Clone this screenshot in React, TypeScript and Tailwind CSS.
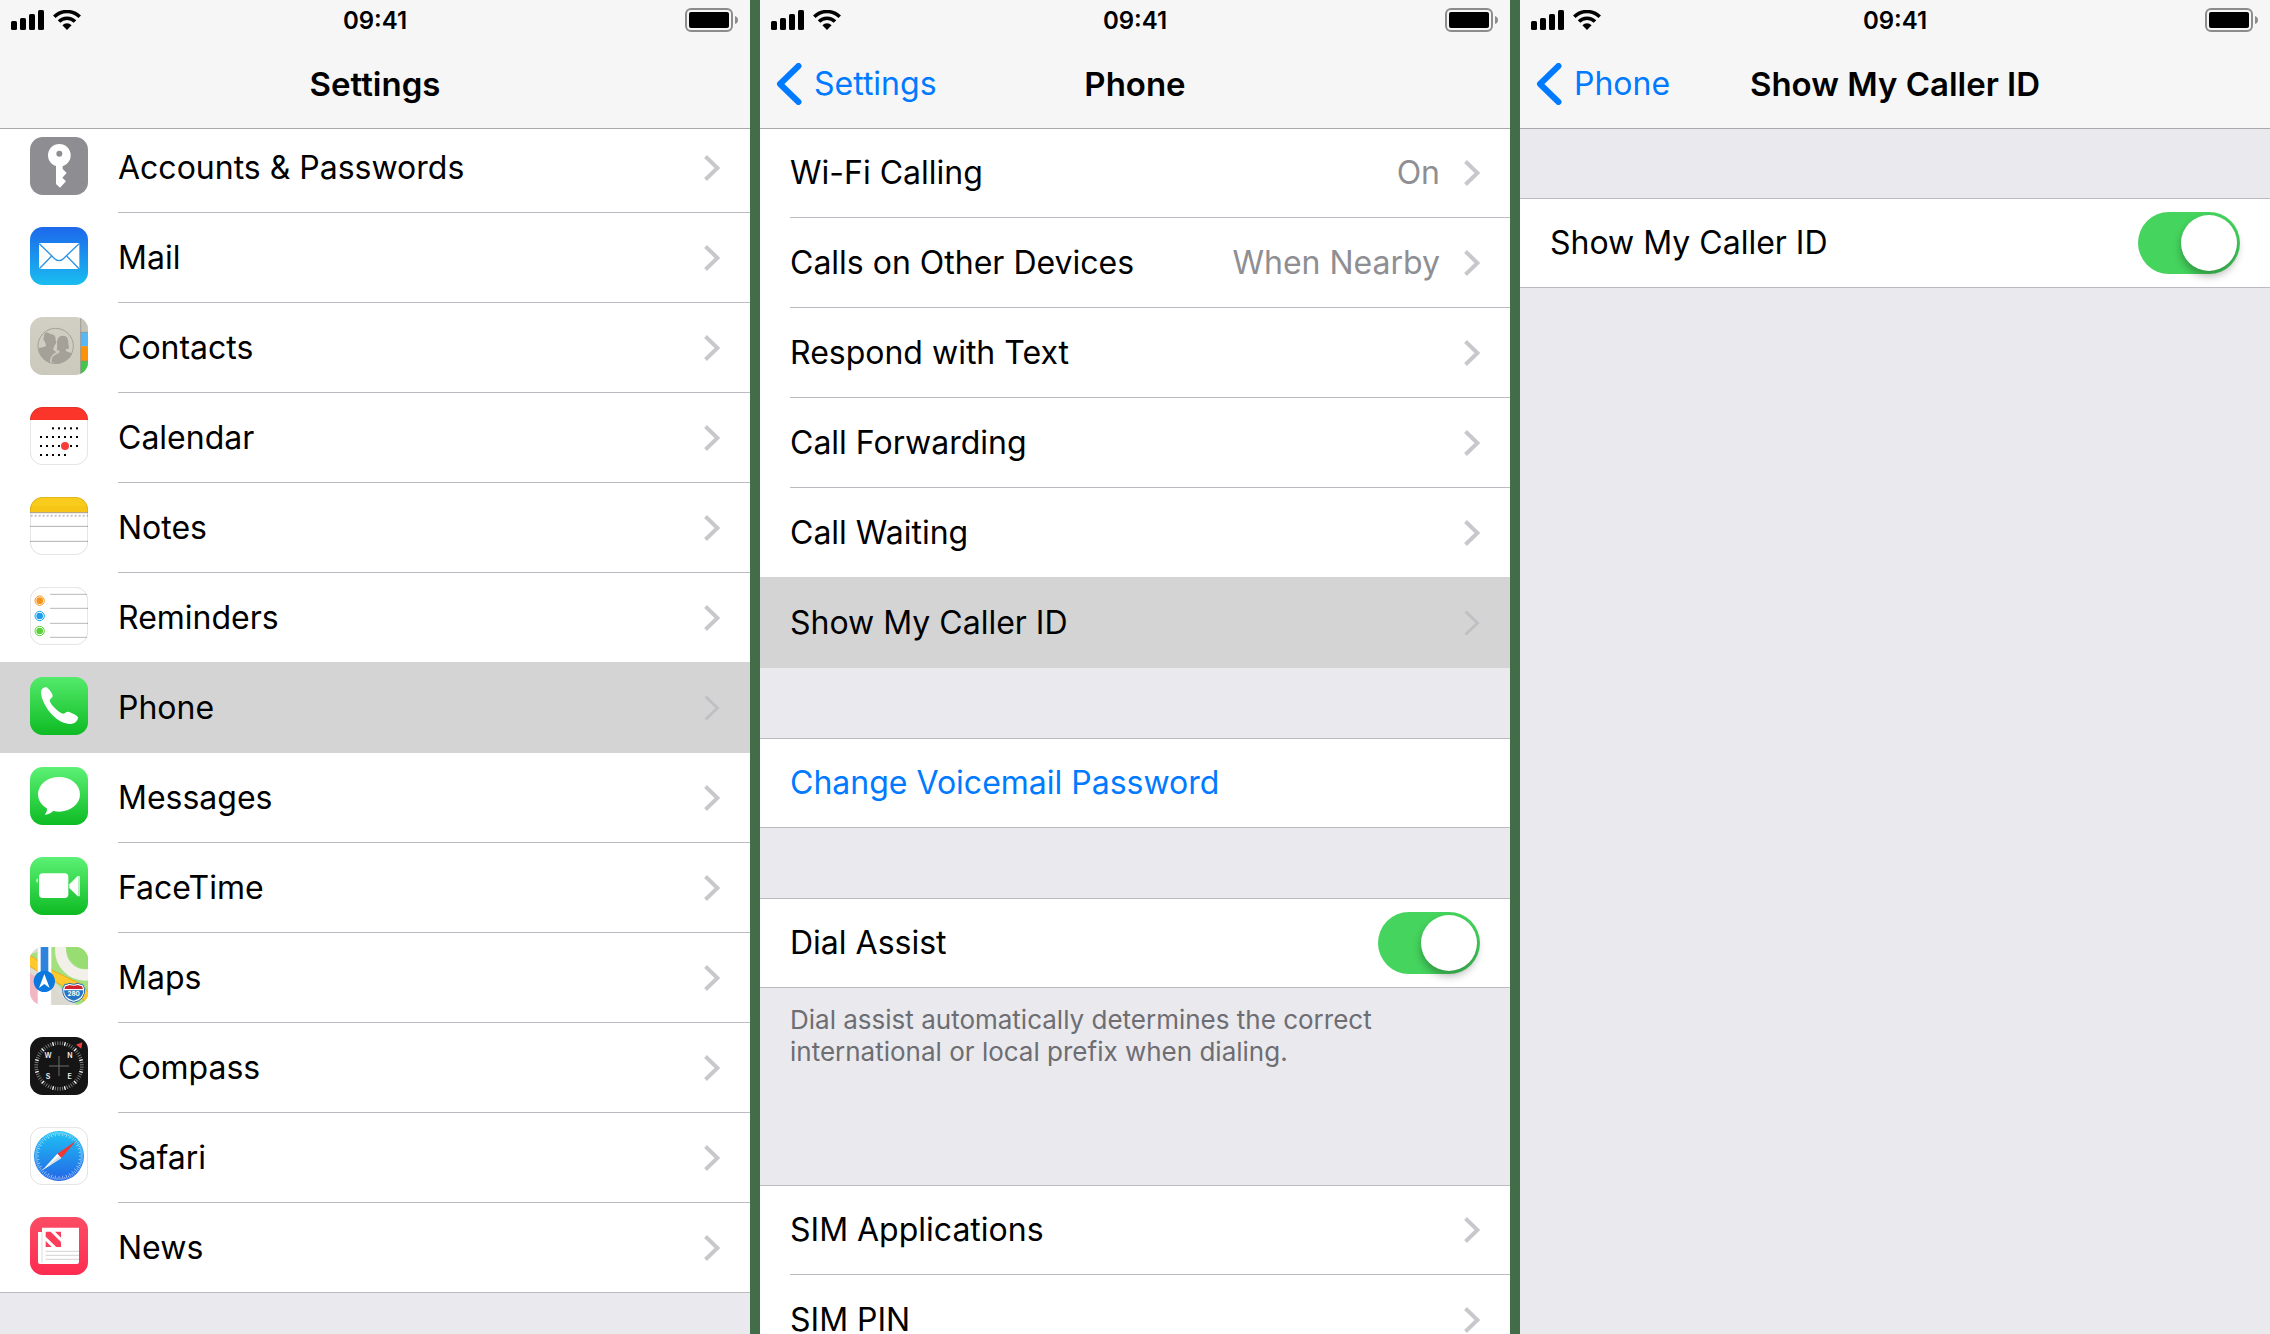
import { useId, useState } from 'react'
import type { ReactNode } from 'react'

const COMPASS_TICKS = Array.from({ length: 60 }, (_, i) => i * 6)
const SAFARI_TICKS = Array.from({ length: 72 }, (_, i) => i * 5)
const CALENDAR_ROWS = [
  { y: 64, xs: [69, 87, 105, 123, 141] },
  { y: 90, xs: [33, 51, 69, 87, 105, 123, 141] },
  { y: 117, xs: [33, 51, 69, 87, 105, 123, 141] },
  { y: 144, xs: [33, 51, 69, 87, 105] },
]

function Tile({
  from,
  to = from,
  outlined,
  children,
}: {
  from: string
  to?: string
  outlined?: boolean
  children: ReactNode
}) {
  const id = useId()
  return (
    <svg viewBox="0 0 174 174" className="mb-1 size-[58px] shrink-0" aria-hidden="true">
      <defs>
        <linearGradient id={`${id}g`} x1="0" y1="0" x2="0" y2="1">
          <stop offset="0" stopColor={from} />
          <stop offset="1" stopColor={to} />
        </linearGradient>
        <clipPath id={`${id}c`}>
          <rect width="174" height="174" rx="38" />
        </clipPath>
      </defs>
      <g clipPath={`url(#${id}c)`}>
        <rect width="174" height="174" fill={`url(#${id}g)`} />
        {children}
      </g>
      {outlined && (
        <rect x="1" y="1" width="172" height="172" rx="37" fill="none" stroke="#000" strokeOpacity="0.18" strokeWidth="2" />
      )}
    </svg>
  )
}

function KeyIcon() {
  return (
    <Tile from="#8e8d92">
      <path fill="#fff" d="M78 85v56l12 11 18-19-11-11 13-14-12-12V85z" />
      <circle cx="88" cy="55" r="34" fill="#fff" />
      <circle cx="88" cy="50" r="9" fill="#8e8d92" />
    </Tile>
  )
}

function MailIcon() {
  return (
    <Tile from="#1d68ec" to="#19bdf0">
      <rect x="27" y="48" width="121" height="78" rx="3" fill="#fff" />
      <g fill="none" stroke="#2a93e6" strokeWidth="4">
        <path d="M28 50l46 45q13 12 26 0l47-45" />
        <path d="M28 125l37-38M147 125l-37-38" />
      </g>
    </Tile>
  )
}

function ContactsIcon() {
  return (
    <Tile from="#d2cfc4" to="#cbc8bc">
      <circle cx="77" cy="87" r="53" fill="#cfccc1" stroke="#a5a199" strokeWidth="3" />
      <path
        fill="#a5a199"
        d="M60 51c14 0 18 9 17 20 4 3 1 11-3 13-1 6-4 9-4 13 1 5 6 6 11 8-8 3-16 9-20 20l-2 12c-16-5-32-24-34-42 5-5 20-4 23-9 1-3-3-8-4-13-4-3-6-9-2-12-1-12 5-20 18-10z"
      />
      <path
        fill="#a5a199"
        d="M98 56c14 0 17 10 17 22 0 8 3 12 2 16-3 2-7 2-10 3 0 7 6 7 14 10l5 3c-8 19-27 28-49 29l-12-3c-1-14 4-20 14-24 6-3 10-4 10-9l-9-5c1-4 2-10 1-20 1-13 5-22 17-22z"
      />
      <path fill="#c5c2b8" d="M152 0h22v45h-22z" />
      <path fill="#b5b3aa" d="M152 0h22v20z" />
      <path fill="#58b8f5" d="M152 46h22v42h-22z" />
      <path fill="#fb9305" d="M152 88h22v44h-22z" />
      <path fill="#43c64d" d="M152 132h22v42h-22z" />
      <path stroke="#8b8a84" strokeWidth="2" d="M152 0v174M152 46h22M152 132h22" />
    </Tile>
  )
}

function CalendarIcon() {
  return (
    <Tile from="#ffffff" outlined>
      <path fill="#fc352b" d="M0 0h174v39H0z" />
      {CALENDAR_ROWS.map(({ y, xs }) => xs.map((x) => <rect key={`${x}-${y}`} x={x - 3} y={y - 3} width="6" height="6" />))}
      <circle cx="105" cy="117" r="12" fill="#f83b37" />
    </Tile>
  )
}

function NotesIcon() {
  return (
    <Tile from="#ffffff" outlined>
      <path fill="#f9cb1c" d="M0 0h174v46H0z" />
      <path fill="#f3bf10" d="M0 28h174v18H0z" opacity="0.5" />
      <path stroke="#a59b83" strokeWidth="3" d="M0 47h174" />
      <path stroke="#c4c4c4" strokeWidth="6" strokeDasharray="6 6" d="M2 56h172" />
      <path stroke="#b0b0b0" strokeWidth="3" d="M0 88h174M0 133h174" />
    </Tile>
  )
}

function RemindersIcon() {
  return (
    <Tile from="#ffffff" outlined>
      <path stroke="#b8b8b8" strokeWidth="3" d="M60 22h114M60 64h114M60 109h114M60 151h114" />
      {[
        { y: 41, color: '#f5941a' },
        { y: 87, color: '#1a9fea' },
        { y: 132, color: '#5bd038' },
      ].map(({ y, color }) => (
        <g key={y}>
          <circle cx="29" cy={y} r="14" fill="#fff" stroke={color} strokeWidth="3" />
          <circle cx="29" cy={y} r="10" fill={color} />
        </g>
      ))}
    </Tile>
  )
}

function PhoneIcon() {
  return (
    <Tile from="#54ea6b" to="#0dbb23">
      <path
        fill="#fff"
        d="M33 44c1-9 9-14 16-13 5 1 19 19 19 25 0 7-8 8-9 14 1 12 27 37 40 40 5 0 9-6 15-6 7 1 28 11 30 17 0 10-9 20-22 20-24 0-48-18-61-34C47 90 32 62 33 44z"
      />
    </Tile>
  )
}

function MessagesIcon() {
  return (
    <Tile from="#5cf175" to="#0dbb23">
      <ellipse cx="87" cy="82" rx="63" ry="52" fill="#fff" />
      <path fill="#fff" d="M48 118c5 8 4 17-4 25 12-1 22-6 29-15z" />
    </Tile>
  )
}

function FaceTimeIcon() {
  return (
    <Tile from="#5cf175" to="#0dbb23">
      <rect x="27" y="49" width="88" height="74" rx="11" fill="#fff" />
      <path fill="#fff" d="M118 82l25-25h3v61h-3l-25-25zM148 57h2v61h-2zM23 64v14l-4-5v-5z" />
    </Tile>
  )
}

function MapsIcon() {
  return (
    <Tile from="#dfdcd3">
      <path fill="#a4df80" d="M64 0h110v174h-34L64 92z" />
      <path fill="#a4df80" d="M0 20l23-4v50L0 40z" />
      <circle cx="166" cy="10" r="74" fill="none" stroke="#f3f0ea" strokeWidth="34" />
      <path fill="#97dd72" d="M108 0c0 34 26 63 66 66V0z" />
      <path fill="#f8a9bd" d="M0 78l23 14v82H0z" opacity="0.75" />
      <path fill="none" stroke="#eda91f" strokeWidth="30" d="M-8 36l72 48 80 38 40 42" />
      <path fill="none" stroke="#fdc92c" strokeWidth="25" d="M-8 36l72 48 80 38 40 42" />
      <path fill="#dcd9d0" d="M64 116l58 58H64z" />
      <path fill="#fff" d="M23 0h41v174H23z" />
      <path stroke="#c9c6bf" strokeWidth="1" d="M23 0v174M64 0v174" />
      <path fill="#2e83dc" d="M32 0h23v90H32z" />
      <circle cx="43" cy="103" r="32" fill="#0a78df" />
      <path fill="#fff" d="M43 81l16 42-16-12-16 12z" />
      <path
        fill="#fff"
        stroke="#226bb5"
        strokeWidth="3"
        d="M104 112q9 1 13-3 14 6 28 0 4 4 13 3 2 7 6 12 2 36-33 42-35-6-33-42 4-5 6-12z"
      />
      <path fill="#d3212e" d="M107 117q8 0 11-3 13 4 26 0 4 3 11 3l4 9h-56z" />
      <path fill="#2575c4" d="M102 130h58q0 24-29 31-29-7-29-31z" />
      <text x="131" y="147" textAnchor="middle" fill="#fff" className="font-['Inter'] text-[19px] font-bold">
        280
      </text>
    </Tile>
  )
}

function CompassIcon() {
  return (
    <Tile from="#151515">
      {COMPASS_TICKS.map((deg) => (
        <path
          key={deg}
          stroke={deg % 30 === 15 || deg % 30 === 0 ? '#fff' : '#a8a8a8'}
          strokeWidth={deg % 30 === 0 ? 4 : 2}
          d="M87 13v11"
          transform={`rotate(${deg + 15} 87 87)`}
        />
      ))}
      <path stroke="#6c6c6c" strokeWidth="3" d="M87 57v60M57 87h60" />
      <path fill="#f0403f" d="M157 16l-3 19-16-12z" />
      <g fill="#f2f2f2" textAnchor="middle" className="font-['Inter'] text-[21px] font-semibold">
        <text x="54" y="63">W</text>
        <text x="120" y="63">N</text>
        <text x="54" y="126">S</text>
        <text x="119" y="126">E</text>
      </g>
    </Tile>
  )
}

function SafariIcon() {
  const id = useId()
  return (
    <Tile from="#ffffff" outlined>
      <linearGradient id={id} x1="0" y1="0" x2="0" y2="1">
        <stop offset="0" stopColor="#1fc3f4" />
        <stop offset="1" stopColor="#2365e6" />
      </linearGradient>
      <circle cx="87" cy="87" r="75" fill={`url(#${id})`} />
      {SAFARI_TICKS.map((deg) => (
        <path
          key={deg}
          stroke="#fff"
          strokeOpacity="0.75"
          strokeWidth="2"
          d={deg % 10 === 0 ? 'M87 15v12' : 'M87 15v7'}
          transform={`rotate(${deg} 87 87)`}
        />
      ))}
      <path fill="#f2362f" d="M138 42L82 80l12 13z" />
      <path fill="#fff" d="M37 130l45-50 12 13z" />
      <path fill="#d8dde6" d="M37 130l51-43 6 6z" />
    </Tile>
  )
}

function NewsIcon() {
  return (
    <Tile from="#fb4d64" to="#fd2c51">
      <path fill="#fff" d="M24 45h14v96H30q-6 0-6-6z" />
      <path fill="#fff" d="M36 32h111v103q0 6-6 6H36z" />
      <path stroke="#c9c9cb" strokeWidth="2" d="M36 45v92" />
      <path fill="#fb3f5b" d="M50 44h12l31 31v15H79L47 59V47q0-3 3-3zM75 44h18v18zM47 72v18h18z" />
      <path stroke="#bdbdbf" strokeWidth="2" d="M47 103h100M47 115h100M47 127h100" />
    </Tile>
  )
}

const SETTINGS = [
  { label: 'Accounts & Passwords', icon: KeyIcon },
  { label: 'Mail', icon: MailIcon },
  { label: 'Contacts', icon: ContactsIcon },
  { label: 'Calendar', icon: CalendarIcon },
  { label: 'Notes', icon: NotesIcon },
  { label: 'Reminders', icon: RemindersIcon },
  { label: 'Phone', icon: PhoneIcon, active: true },
  { label: 'Messages', icon: MessagesIcon },
  { label: 'FaceTime', icon: FaceTimeIcon },
  { label: 'Maps', icon: MapsIcon },
  { label: 'Compass', icon: CompassIcon },
  { label: 'Safari', icon: SafariIcon },
  { label: 'News', icon: NewsIcon },
]

const CALL_OPTIONS = [
  { label: 'Wi-Fi Calling', value: 'On' },
  { label: 'Calls on Other Devices', value: 'When Nearby' },
  { label: 'Respond with Text' },
  { label: 'Call Forwarding' },
  { label: 'Call Waiting' },
  { label: 'Show My Caller ID', active: true },
]

function StatusBar() {
  return (
    <div className="grid h-10 grid-cols-3 items-center px-[11px]">
      <div className="flex items-center gap-2">
        <svg viewBox="0 0 34 20" className="h-5 w-[34px]" aria-hidden="true">
          <rect y="11" width="6" height="9" rx="1.5" />
          <rect x="9" y="8" width="6" height="12" rx="1.5" />
          <rect x="18" y="4" width="6" height="16" rx="1.5" />
          <rect x="27" width="6" height="20" rx="1.5" />
        </svg>
        <svg viewBox="0 0 28 20" className="h-5 w-7" aria-hidden="true">
          <g fill="none" stroke="#000" strokeWidth="3.6">
            <path d="M1.3 6.8a18 18 0 0 1 25.4 0" />
            <path d="M6 11.6a11.3 11.3 0 0 1 16 0" />
          </g>
          <path d="M14 20l-4.6-4.8a6.6 6.6 0 0 1 9.2 0z" />
        </svg>
      </div>
      <div className="pt-0.5 text-center text-[24px] font-semibold leading-[38px]">09:41</div>
      <svg viewBox="0 0 54 24" className="h-6 w-[54px] justify-self-end" aria-hidden="true">
        <rect x="1" y="1" width="46" height="22" rx="5" fill="none" stroke="#8c8c8c" strokeWidth="2" />
        <rect x="4" y="4" width="40" height="16" rx="2" />
        <path fill="#8c8c8c" d="M50 8q3 1 3 4t-3 4z" />
      </svg>
    </div>
  )
}

function Header({ title, back }: { title: string; back?: string }) {
  return (
    <header className="relative z-10 border-b border-[#a9a9ac] bg-[#f6f6f7]">
      <StatusBar />
      <div className="grid h-[88px] grid-cols-[1fr_auto_1fr] items-center px-4">
        <div>
          {back && (
            <button className="flex items-center gap-3 text-[32px] leading-[42px] text-[#007aff]">
              <svg viewBox="0 0 26 42" className="h-[42px] w-[26px]" aria-hidden="true">
                <path
                  d="M22.500 3L4 21l18.500 18"
                  fill="none"
                  stroke="currentColor"
                  strokeWidth="6"
                  strokeLinecap="round"
                  strokeLinejoin="round"
                />
              </svg>
              {back}
            </button>
          )}
        </div>
        <h1 className="text-[33px] font-semibold leading-[42px]">{title}</h1>
      </div>
    </header>
  )
}

function Chevron({ active }: { active?: boolean }) {
  return (
    <svg
      viewBox="0 0 16 26"
      className={`h-[26px] w-4 shrink-0 ${active ? 'text-[#c0c0c4]' : 'text-[#c7c7cc]'}`}
      aria-hidden="true"
    >
      <path d="M1.500 1.500L13.500 13 1.500 24.500" fill="none" stroke="currentColor" strokeWidth={active ? 3 : 4} />
    </svg>
  )
}

function Group({ children }: { children: ReactNode }) {
  return <ul className="border-t border-[#bcbbc1] bg-white">{children}</ul>
}

function Row({
  label,
  value,
  icon: Icon,
  active,
}: {
  label: string
  value?: string
  icon?: () => ReactNode
  active?: boolean
}) {
  return (
    <li
      className={`group/row first:-mt-px ${
        active ? 'relative -mt-px bg-[#d4d4d4] pt-px' : 'last:border-b last:border-[#bcbbc1]'
      }`}
    >
      <button
        className={`flex h-[90px] w-full items-center gap-[30px] pl-[30px] text-left ${
          active ? '' : 'group-last/row:h-[89px]'
        }`}
      >
        {Icon && <Icon />}
        <span
          className={`flex flex-1 items-center gap-6 self-stretch pr-[30px] ${
            active ? 'border-b border-transparent' : 'border-b border-[#bcbbc1] group-last/row:border-b-0'
          }`}
        >
          <span className="flex-1">{label}</span>
          {value && <span className="text-[#8e8e93]">{value}</span>}
          <Chevron active={active} />
        </span>
      </button>
    </li>
  )
}

function ToggleRow({ label }: { label: string }) {
  const [on, setOn] = useState(true)
  return (
    <li>
      <label className="flex h-[89px] items-center justify-between border-b border-[#bcbbc1] px-[30px]">
        {label}
        <input
          type="checkbox"
          role="switch"
          checked={on}
          onChange={(e) => setOn(e.target.checked)}
          className="h-[62px] w-[102px] appearance-none rounded-full bg-[#e5e5ea] p-[3px] before:block before:size-14 before:rounded-full before:bg-white before:shadow-[0_5px_8px_rgba(0,0,0,0.3)] before:transition-[margin] checked:bg-[#45d45e] checked:before:ml-10"
        />
      </label>
    </li>
  )
}

export default function App() {
  return (
    <div className="grid h-screen grid-cols-3 grid-rows-1 gap-x-2.5 overflow-hidden bg-[#436d49] font-['Inter',sans-serif] text-[32px] leading-[42px] text-black">
      <section className="overflow-hidden bg-[#e9e9ee]">
        <Header title="Settings" />
        {/* scrolled a little, so the first row runs under the header */}
        <div className="-mt-1.5">
          <Group>
            {SETTINGS.map((item) => (
              <Row key={item.label} {...item} />
            ))}
          </Group>
        </div>
      </section>

      <section className="overflow-hidden bg-[#e9e9ee]">
        <Header title="Phone" back="Settings" />
        <div className="-mt-px flex flex-col gap-[70px]">
          <Group>
            {CALL_OPTIONS.map((item) => (
              <Row key={item.label} {...item} />
            ))}
          </Group>
          <Group>
            <li>
              <button className="block h-[89px] w-full border-b border-[#bcbbc1] px-[30px] text-left text-[#007aff]">
                Change Voicemail Password
              </button>
            </li>
          </Group>
          <div>
            <Group>
              <ToggleRow label="Dial Assist" />
            </Group>
            <p className="h-[127px] max-w-[690px] px-[30px] pt-4 text-[26px] leading-8 text-[#6d6d72]">
              Dial assist automatically determines the correct international or local prefix when dialing.
            </p>
          </div>
          <Group>
            <Row label="SIM Applications" />
            <Row label="SIM PIN" />
          </Group>
        </div>
      </section>

      <section className="overflow-hidden bg-[#e9e9ee]">
        <Header title="Show My Caller ID" back="Phone" />
        <div className="pt-[69px]">
          <Group>
            <ToggleRow label="Show My Caller ID" />
          </Group>
        </div>
      </section>
    </div>
  )
}
